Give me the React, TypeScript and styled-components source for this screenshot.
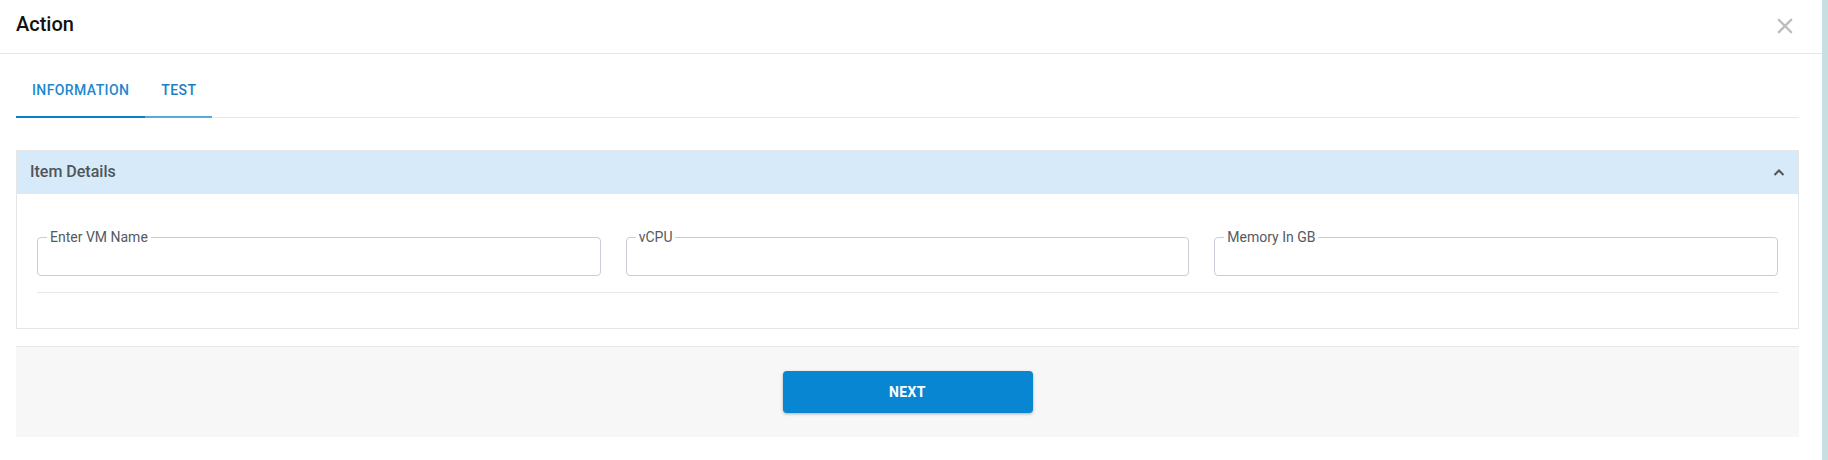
import React, { useState } from "react";
import styled, { createGlobalStyle } from "styled-components";

const GlobalStyle = createGlobalStyle`
  html, body {
    margin: 0;
    padding: 0;
    background: #c8dfe1;
    font-family: Roboto, "Liberation Sans", Arial, sans-serif;
  }
  * {
    box-sizing: border-box;
  }
`;

const Dialog = styled.section`
  margin-right: 6px;
  min-height: 100vh;
  background: #ffffff;
  display: flex;
  flex-direction: column;
`;

const Header = styled.header`
  display: flex;
  align-items: center;
  justify-content: space-between;
  padding: 12px 29px 17px 16px;
  border-bottom: 1px solid #e6e6e6;
`;

const Title = styled.h2`
  margin: 0;
  font-size: 20px;
  line-height: 24px;
  font-weight: 500;
  color: #111;
`;

const CloseButton = styled.button`
  border: none;
  background: none;
  padding: 0;
  width: 16px;
  height: 16px;
  display: flex;
  cursor: pointer;
  margin-top: 3px;
`;

const Content = styled.div`
  padding: 12px 23px 0 16px;
`;

const TabList = styled.div`
  display: flex;
  border-bottom: 1px solid #e8e8e8;
`;

const Tab = styled.button<{ $indicator: string; $color: string }>`
  border: none;
  background: none;
  margin-bottom: -1px;
  padding: 16px 16px 18px;
  border-bottom: 2px solid ${(p) => p.$indicator};
  font-family: inherit;
  font-size: 14px;
  line-height: 16px;
  font-weight: 500;
  letter-spacing: 0.4px;
  text-transform: uppercase;
  color: ${(p) => p.$color};
  cursor: pointer;
`;

const Accordion = styled.div`
  margin-top: 32px;
  border: 1px solid #e6e6e6;
`;

const AccordionHeader = styled.div`
  display: flex;
  align-items: center;
  justify-content: space-between;
  padding: 11px 13px 12px;
  background: #d6eaf9;
  cursor: pointer;
`;

const AccordionTitle = styled.span`
  font-size: 16px;
  line-height: 20px;
  font-weight: 500;
  color: #50555a;
`;

const AccordionBody = styled.div`
  padding: 35px 20px 35px;
`;

const FieldRow = styled.div`
  display: grid;
  grid-template-columns: repeat(3, 1fr);
  gap: 25px;
  padding-bottom: 16px;
  border-bottom: 1px solid #e8e8e8;
`;

const Field = styled.fieldset`
  margin: 0;
  padding: 0 9px;
  min-width: 0;
  border: 1px solid #c9ced6;
  border-radius: 4px;
`;

const Legend = styled.legend`
  padding: 0 3px;
  font-size: 14px;
  line-height: 16px;
  color: #555a5f;
`;

const Input = styled.input`
  display: block;
  width: 100%;
  height: 30px;
  border: none;
  outline: none;
  padding: 0 3px;
  font-family: inherit;
  font-size: 14px;
  background: transparent;
`;

const Footer = styled.div`
  margin-top: 17px;
  display: flex;
  justify-content: center;
  padding: 24px 0;
  background: #f7f7f7;
  border-top: 1px solid #e8e8e8;
`;

const NextButton = styled.button`
  width: 250px;
  height: 42px;
  border: none;
  border-radius: 4px;
  background: #0886d1;
  color: #ffffff;
  font-family: inherit;
  font-size: 14px;
  font-weight: 700;
  letter-spacing: 0.4px;
  box-shadow: 0 1px 3px rgba(0, 0, 0, 0.3);
  cursor: pointer;
`;

const fields = ["Enter VM Name", "vCPU", "Memory In GB"];

const App = () => {
  const [tab, setTab] = useState("information");
  const [open, setOpen] = useState(true);
  return (
    <Dialog>
      <GlobalStyle />
      <Header>
        <Title>Action</Title>
        <CloseButton aria-label="close">
          <svg width="16" height="16" viewBox="0 0 16 16">
            <path
              d="M2 2 L14 14 M14 2 L2 14"
              stroke="#bdbdbd"
              strokeWidth="2.4"
              strokeLinecap="square"
            />
          </svg>
        </CloseButton>
      </Header>
      <Content>
        <TabList>
          <Tab
            $indicator="#0a80cb"
            $color={tab === "information" ? "#1e88d0" : "#1c7dc2"}
            onClick={() => setTab("information")}
          >
            Information
          </Tab>
          <Tab
            $indicator="#59a9da"
            $color="#1c7dc2"
            onClick={() => setTab("test")}
          >
            Test
          </Tab>
        </TabList>
        <Accordion>
          <AccordionHeader onClick={() => setOpen(!open)}>
            <AccordionTitle>Item Details</AccordionTitle>
            <svg width="12" height="8" viewBox="0 0 12 8">
              <polyline
                points="1.5,7 6,2.5 10.5,7"
                fill="none"
                stroke="#555"
                strokeWidth="2"
              />
            </svg>
          </AccordionHeader>
          {open && (
            <AccordionBody>
              <FieldRow>
                {fields.map((f) => (
                  <Field key={f}>
                    <Legend>{f}</Legend>
                    <Input />
                  </Field>
                ))}
              </FieldRow>
            </AccordionBody>
          )}
        </Accordion>
        <Footer>
          <NextButton>NEXT</NextButton>
        </Footer>
      </Content>
    </Dialog>
  );
};

export default App;
